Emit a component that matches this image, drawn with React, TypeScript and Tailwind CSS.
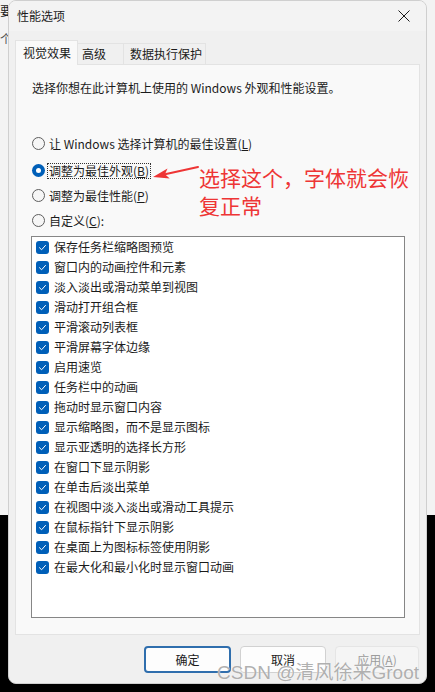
import React from "react";

const effects = [
  "保存任务栏缩略图预览",
  "窗口内的动画控件和元素",
  "淡入淡出或滑动菜单到视图",
  "滑动打开组合框",
  "平滑滚动列表框",
  "平滑屏幕字体边缘",
  "启用速览",
  "任务栏中的动画",
  "拖动时显示窗口内容",
  "显示缩略图，而不是显示图标",
  "显示亚透明的选择长方形",
  "在窗口下显示阴影",
  "在单击后淡出菜单",
  "在视图中淡入淡出或滑动工具提示",
  "在鼠标指针下显示阴影",
  "在桌面上为图标标签使用阴影",
  "在最大化和最小化时显示窗口动画",
];

const Radio = ({
  label,
  keyChar,
  selected = false,
  focused = false,
  tail = "",
}: {
  label: string;
  keyChar: string;
  selected?: boolean;
  focused?: boolean;
  tail?: string;
}) => {
  return (
    <div className="flex items-center h-[25px] pl-[1px]">
      {selected ? (
        <span className="w-[13px] h-[13px] rounded-full bg-[#005fb8] flex items-center justify-center shrink-0">
          <span className="w-[5px] h-[5px] rounded-full bg-white" />
        </span>
      ) : (
        <span className="w-[13px] h-[13px] rounded-full border border-[#5e5e5e] bg-[#f6f6f6] shrink-0" />
      )}
      <span
        className={`ml-[3px] leading-[14px] px-[1px] ${
          focused ? "outline outline-1 outline-dotted outline-[#333]" : ""
        }`}
      >
        {label}(<span className="underline">{keyChar}</span>){tail}
      </span>
    </div>
  );
};

const Check = ({ label }: { label: string }) => {
  return (
    <div className="flex items-center h-[20px] pl-[4px]">
      <span className="w-[13px] h-[13px] rounded-[3px] bg-[#005fb8] flex items-center justify-center shrink-0">
        <svg viewBox="0 0 12 12" className="w-[9px] h-[9px]">
          <path
            d="M2 6.3 L4.8 9 L10 3.2"
            fill="none"
            stroke="white"
            strokeWidth="1.3"
            strokeLinecap="round"
            strokeLinejoin="round"
          />
        </svg>
      </span>
      <span className="ml-[5px] leading-[14px]">{label}</span>
    </div>
  );
};

const App = () => {
  return (
    <div
      className="relative w-[435px] h-[692px] overflow-hidden flex text-[12px] text-[#1b1b1b] bg-[linear-gradient(to_bottom,#f3f3f3_0px,#f3f3f3_515px,#000_515px)]"
      style={{ fontFamily: '"Noto Sans CJK SC", "Noto Sans", sans-serif' }}
    >
      {/* background window peeking out */}
      <div className="w-[8px] shrink-0 overflow-hidden flex flex-col">
        <span className="mt-[4px] leading-[14px] whitespace-nowrap">要</span>
        <span className="mt-[14px] leading-[14px] whitespace-nowrap text-[#555]">个</span>
      </div>

      <div className="relative w-[419px] h-[684px] shrink-0 rounded-lg bg-[#f0f0f0] border border-[#cfcfcf] flex flex-col overflow-hidden">
        {/* title bar */}
        <div className="h-[30px] bg-[#f3f3f3] flex items-center justify-between pl-[8px] pr-[16px]">
          <span className="leading-[14px]">性能选项</span>
          <svg viewBox="0 0 12 12" className="w-[12px] h-[12px]">
            <path d="M0.5 0.5 L11.5 11.5 M11.5 0.5 L0.5 11.5" stroke="#1b1b1b" strokeWidth="1" />
          </svg>
        </div>

        <div className="flex flex-col px-[6px] pt-[9px]">
          {/* tabs */}
          <div className="flex items-end h-[24px]">
            <div className="relative z-10 w-[63px] h-[25px] -mb-px bg-[#f9f9f9] border border-b-0 border-[#e3e3e3] pl-[7px] flex items-center">
              视觉效果
            </div>
            <div className="w-[46px] h-[21px] bg-[#f0f0f0] border border-b-0 border-l-0 border-[#e3e3e3] pl-[4px] flex items-center">
              高级
            </div>
            <div className="w-[82px] h-[21px] bg-[#f0f0f0] border border-b-0 border-l-0 border-[#e3e3e3] pl-[6px] flex items-center">
              数据执行保护
            </div>
          </div>

          {/* panel */}
          <div className="h-[571px] bg-[#f9f9f9] border border-[#e3e3e3] pl-[15px] pr-[14px] pt-[16px] flex flex-col">
            <p className="leading-[14px] pl-[1px]">
              选择你想在此计算机上使用的 Windows 外观和性能设置。
            </p>

            <div className="mt-[36px] flex flex-col">
              <div className="mb-[2px]">
                <Radio label="让 Windows 选择计算机的最佳设置" keyChar="L" />
              </div>
              <Radio label="调整为最佳外观" keyChar="B" selected focused />
              <Radio label="调整为最佳性能" keyChar="P" />
              <Radio label="自定义" keyChar="C" tail=":" />
            </div>

            <div className="mt-[3px] h-[382px] bg-white border border-[#868686] flex flex-col">
              {effects.map((e) => (
                <Check key={e} label={e} />
              ))}
            </div>
          </div>

          {/* buttons */}
          <div className="mt-[11px] flex justify-end gap-[9px] pr-[1px]">
            <button className="w-[87px] h-[27px] rounded-[4px] bg-[#fdfdfd] border-2 border-[#2f6ead] leading-[14px]">
              确定
            </button>
            <button className="w-[86px] h-[27px] rounded-[4px] bg-[#fdfdfd] border border-[#d1d1d1] leading-[14px]">
              取消
            </button>
            <button className="w-[84px] h-[27px] rounded-[4px] bg-[#f5f5f5] border border-[#e5e5e5] text-[#9c9c9c] leading-[14px]">
              应用(<span className="underline">A</span>)
            </button>
          </div>
        </div>

        {/* red annotation */}
        <svg
          viewBox="0 0 65 28"
          className="absolute left-[132px] top-[158px] w-[65px] h-[28px]"
        >
          <path d="M24 15.2 L57 8" stroke="#ee3535" strokeWidth="2" strokeLinecap="round" />
          <polygon points="12,18 26.5,9.6 24,15.2 28.7,19.6" fill="#ee3535" />
        </svg>
        <div className="absolute left-[190px] top-[162px] text-[21px] leading-[28px] text-[#ee3535] whitespace-nowrap">
          选择这个，字体就会恢
          <br />
          复正常
        </div>
      </div>

      <div className="flex-1" />

      {/* watermark */}
      <div
        className="absolute right-[16px] top-[662px] text-[19px] leading-[22px] text-[#9a9a9a]/80 whitespace-nowrap"
        style={{ fontFamily: '"Liberation Sans", "Noto Sans CJK SC", sans-serif', textShadow: "0 0 1px #fff" }}
      >
        CSDN @清风徐来Groot
      </div>
    </div>
  );
};

export default App;
